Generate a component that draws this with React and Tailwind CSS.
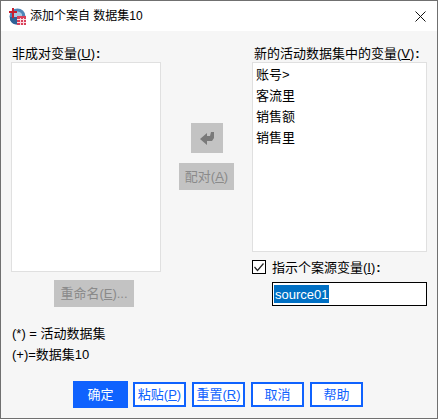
const FONT = "font-['Liberation_Sans','Noto_Sans_CJK_SC',sans-serif]";

const Ghost = ({ children, className }) => (
  <div className={`flex items-center justify-center bg-[#c3c3c3] text-[#8a8a8a] text-[13px] ${className}`}>
    {children}
  </div>
);

const Btn = ({ children }) => (
  <div className="flex items-center justify-center w-[53px] h-[25px] border-2 border-[#0f62fe] bg-white text-[#0f62fe] text-[13px]">
    {children}
  </div>
);

const AppIcon = () => (
  <svg width="17" height="17" viewBox="0 0 17 17" className="shrink-0">
    <circle cx="8.500" cy="8.500" r="8" fill="#4f86b8" />
    <path d="M4 5a6 6 0 0 1 9 1v4H5z" fill="#a9c8e2" />
    <path d="M1 12a8 8 0 0 0 8 4.500V9H1z" fill="#2f6196" />
    <path d="M0 3h3V0h2v3h3v2H5v5H3V5H0z" fill="#c8202f" />
    <rect x="8" y="8" width="9" height="9" fill="#d9415a" />
    <path d="M8 11.500h9M8 14.500h9M11.500 10v7M14.500 10v7" stroke="#fbdde3" strokeWidth="1" />
  </svg>
);

export default function App() {
  return (
    <div className={`${FONT} w-[438px] h-[419px] flex flex-col bg-[#f6f6f6] border border-[#707070] text-black text-[13px] leading-none overflow-hidden`}>
      <div className="h-[30px] shrink-0 bg-white flex items-center pl-[8px] pr-[8px]">
        <AppIcon />
        <span className="ml-[4px] text-[12px]">添加个案自 数据集10</span>
        <svg className="ml-auto mr-[3px]" width="11" height="11" viewBox="0 0 11 11">
          <path d="M.5.500l10 10M10.500.500l-10 10" stroke="#111" strokeWidth="1" />
        </svg>
      </div>

      <div className="flex pl-[10px] pr-[10px] pt-[13px]">
        <div className="w-[150px] shrink-0">
          <div className="h-[18px] pl-[1px] flex items-center">
            非成对变量(<u>U</u>)<b className="ml-[1px]">:</b>
          </div>
          <div className="h-[210px] bg-white border border-[#e0e0e0]" />
          <Ghost className="w-[80px] h-[27px] mt-[8px] ml-[43px]">重命名(<u>E</u>)...</Ghost>
        </div>

        <div className="w-[91px] shrink-0 flex flex-col items-center pt-[79px]">
          <Ghost className="w-[32px] h-[30px]">
            <svg width="14" height="13" viewBox="0 0 14 13">
              <path d="M0 7L7 1V4H10L11 0H14V6L12 9H7V13Z" fill="#7a7a7a" />
            </svg>
          </Ghost>
          <Ghost className="w-[55px] h-[27px] mt-[10px]">配对(<u>A</u>)</Ghost>
        </div>

        <div className="flex-1">
          <div className="h-[18px] pl-[2px] flex items-center whitespace-nowrap">
            新的活动数据集中的变量(<u>V</u>)<b className="ml-[1px]">:</b>
          </div>
          <div className="h-[190px] bg-white border border-[#e0e0e0] pl-[3px] pt-[1px] flex flex-col">
            <div className="h-[21px] flex items-center">账号&gt;</div>
            <div className="h-[21px] flex items-center">客流里</div>
            <div className="h-[21px] flex items-center">销售额</div>
            <div className="h-[21px] flex items-center">销售里</div>
          </div>
          <div className="flex items-center mt-[8px] h-[14px]">
            <div className="w-[14px] h-[14px] border border-black bg-white flex items-center justify-center">
              <svg width="12" height="12" viewBox="0 0 12 12">
                <path d="M1.500 6l3 3.500 6-7" fill="none" stroke="#222" strokeWidth="1.200" />
              </svg>
            </div>
            <span className="ml-[6px] whitespace-nowrap">指示个案源变量(<u>I</u>)<b className="ml-[1px]">:</b></span>
          </div>
          <div className="h-[24px] mt-[8px] ml-[20px] border border-black bg-white flex items-center pl-[1px]">
            <span className="bg-[#0070c4] text-white h-[18px] flex items-center px-[1px] text-[13px]">source01</span>
          </div>
        </div>
      </div>

      <div className="pl-[11px] mt-[16px] flex flex-col">
        <div className="h-[21px] flex items-center">(*) = 活动数据集</div>
        <div className="h-[21px] flex items-center">(+)=数据集10</div>
      </div>

      <div className="flex items-center pl-[72px] gap-[6px] mt-[16px]">
        <div className="flex items-center justify-center w-[55px] h-[27px] bg-[#0f62fe] text-white text-[13px] -mr-[1px]">确定</div>
        <Btn>粘贴(<u>P</u>)</Btn>
        <Btn>重置(<u>R</u>)</Btn>
        <Btn>取消</Btn>
        <Btn>帮助</Btn>
      </div>
    </div>
  );
}
